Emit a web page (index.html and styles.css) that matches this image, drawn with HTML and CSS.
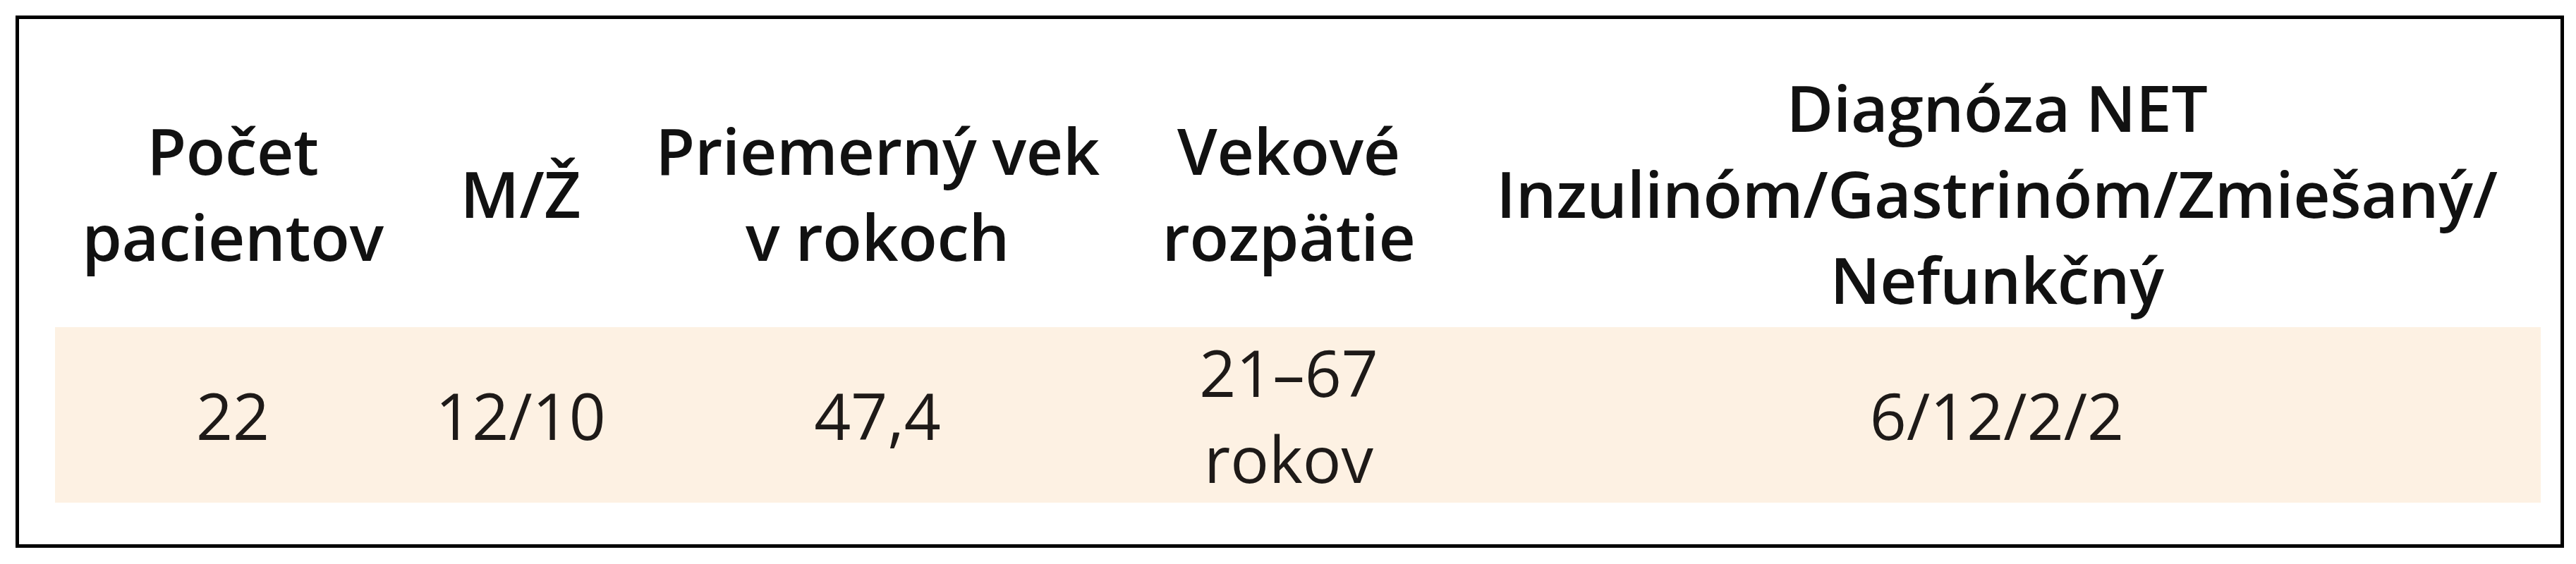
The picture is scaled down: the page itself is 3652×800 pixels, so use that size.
FILE: index.html
```html
<!DOCTYPE html>
<html lang="sk">
<head>
<meta charset="utf-8">
<title>Tabuľka pacientov</title>
<link rel="stylesheet" href="styles.css">
</head>
<body>
<div class="frame">
  <div class="table">
    <div class="row head">
      <div class="cell">Počet<br>pacientov</div>
      <div class="cell">M/Ž</div>
      <div class="cell">Priemerný vek<br>v rokoch</div>
      <div class="cell">Vekové<br>rozpätie</div>
      <div class="cell">Diagnóza NET<br>Inzulinóm/Gastrinóm/Zmiešaný/<br>Nefunkčný</div>
    </div>
    <div class="row data">
      <div class="cell">22</div>
      <div class="cell">12/10</div>
      <div class="cell">47,4</div>
      <div class="cell">21–67<br>rokov</div>
      <div class="cell">6/12/2/2</div>
    </div>
  </div>
</div>
</body>
</html>
```
FILE: styles.css
```css
html, body {
  margin: 0;
  padding: 0;
  background: #ffffff;
}

body {
  font-family: "Open Sans", "Noto Sans", "Liberation Sans", sans-serif;
}

.frame {
  box-sizing: border-box;
  margin: 22px 17px 0 22px;
  height: 755px;
  border: 5px solid #000000;
  padding: 64px 28px 0 51px;
}

.row {
  display: grid;
  grid-template-columns: 504px 312px 700px 466px 1542px;
  align-items: center;
}

.cell {
  text-align: center;
  white-space: nowrap;
  font-size: 91px;
  line-height: 122px;
}

.head {
  height: 366px;
  padding-bottom: 7px;
  color: #111111;
  font-weight: 600;
  letter-spacing: -0.02em;
  word-spacing: -0.08em;
}

.data {
  height: 249px;
  background: #fdf1e3;
  color: #1e1a18;
  font-weight: 400;
}
```
